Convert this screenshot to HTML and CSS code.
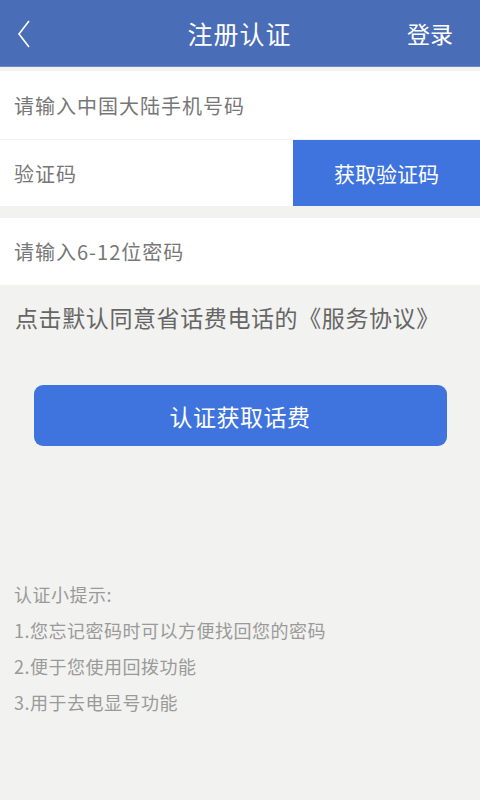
FILE: index.html
```html
<!DOCTYPE html>
<html lang="zh-CN">
<head>
    <meta charset="UTF-8">
    <meta name="viewport" content="width=device-width, initial-scale=1.0">
    <title>注册认证</title>
    <link rel="stylesheet" href="styles.css">
</head>
<body>
    <div class="header">
        <svg class="back" width="16" height="30" viewBox="0 0 16 30">
            <polyline points="13,2 3,15 13,28" fill="none" stroke="#ffffff" stroke-width="1.6"/>
        </svg>
        <h1 class="title">注册认证</h1>
        <span class="login">登录</span>
    </div>

    <form class="form">
        <div class="row">
            <input class="field" type="text" placeholder="请输入中国大陆手机号码">
        </div>
        <div class="row row-code">
            <input class="field" type="text" placeholder="验证码">
            <button type="button" class="btn-code">获取验证码</button>
        </div>
        <div class="row row-pwd">
            <input class="field" type="password" placeholder="请输入6-12位密码">
        </div>
    </form>

    <p class="agree">点击默认同意省话费电话的《服务协议》</p>

    <button type="button" class="btn-submit">认证获取话费</button>

    <div class="tips">
        <p>认证小提示:</p>
        <p>1.您忘记密码时可以方便找回您的密码</p>
        <p>2.便于您使用回拨功能</p>
        <p>3.用于去电显号功能</p>
    </div>
</body>
</html>
```

FILE: styles.css
```css
body {
    margin: 0;
    background-color: #f2f2f0;
    font-family: "Noto Sans CJK SC", "Noto Sans", sans-serif;
    height: 800px;
}
.header {
    height: 66px;
    background-color: #4a6db7;
    display: flex;
    align-items: center;
    justify-content: space-between;
    padding: 0 27px 0 16px;
    color: #ffffff;
    border-bottom: 1px solid #6f8bc6;
}
.back {
    display: block;
    margin-top: 1px;
}
.title {
    margin: 0 0 0 40px;
    font-size: 25px;
    letter-spacing: 1px;
    font-weight: normal;
}
.login {
    font-size: 23px;
}
.form {
    margin-top: 4px;
}
.row {
    height: 68px;
    background-color: #ffffff;
    display: flex;
    align-items: stretch;
}
.row-code {
    border-top: 1px solid #f0f0ee;
    height: 66px;
}
.row-pwd {
    margin-top: 12px;
    height: 67px;
}
.field {
    flex: 1;
    min-width: 0;
    border: none;
    outline: none;
    background: transparent;
    padding: 0 14px;
    font-family: inherit;
    font-size: 20px;
    letter-spacing: 1px;
    color: #333;
}
.field::placeholder {
    color: #777777;
}
.btn-code {
    width: 187px;
    border: none;
    background-color: #3f74de;
    color: #ffffff;
    font-family: inherit;
    font-size: 21px;
    cursor: pointer;
}
.agree {
    margin: 12px 0 0 15px;
    font-size: 23px;
    letter-spacing: 0.6px;
    color: #666666;
    line-height: 40px;
}
.btn-submit {
    display: block;
    margin: 48px auto 0;
    width: 413px;
    height: 61px;
    border: none;
    border-radius: 9px;
    background-color: #3f74de;
    color: #ffffff;
    font-family: inherit;
    font-size: 23px;
    letter-spacing: 0.5px;
    cursor: pointer;
}
.tips {
    margin: 130px 0 0 14px;
    color: #9a9a9a;
    font-size: 18px;
    letter-spacing: 0.5px;
}
.tips p {
    margin: 0;
    line-height: 36px;
}
```
